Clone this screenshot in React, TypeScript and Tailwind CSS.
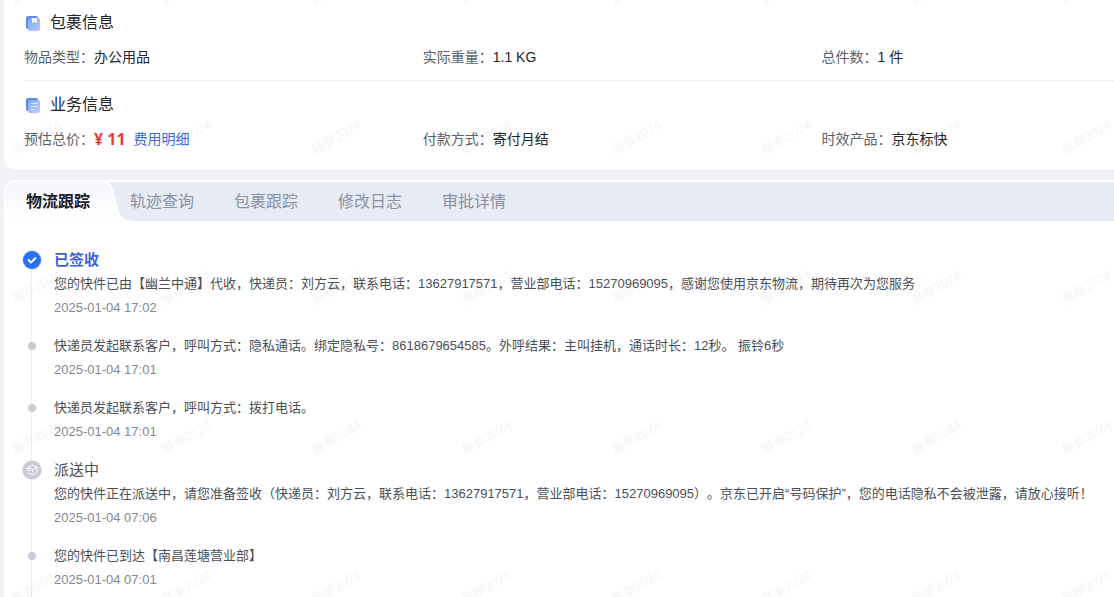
import { useState } from 'react';

const packageInfo = [
  { label: '物品类型：', value: '办公用品' },
  { label: '实际重量：', value: '1.1 KG' },
  { label: '总件数：', value: '1 件' },
];

const tabs = ['物流跟踪', '轨迹查询', '包裹跟踪', '修改日志', '审批详情'];

type TrackingEvent = {
  id: number;
  status?: 'signed' | 'delivering';
  title?: string;
  text: string;
  time: string;
};

const events: TrackingEvent[] = [
  {
    id: 1,
    status: 'signed',
    title: '已签收',
    text: '您的快件已由【幽兰中通】代收，快递员：刘方云，联系电话：13627917571，营业部电话：15270969095，感谢您使用京东物流，期待再次为您服务',
    time: '2025-01-04 17:02',
  },
  {
    id: 2,
    text: '快递员发起联系客户，呼叫方式：隐私通话。绑定隐私号：8618679654585。外呼结果：主叫挂机，通话时长：12秒。 振铃6秒',
    time: '2025-01-04 17:01',
  },
  {
    id: 3,
    text: '快递员发起联系客户，呼叫方式：拨打电话。',
    time: '2025-01-04 17:01',
  },
  {
    id: 4,
    status: 'delivering',
    title: '派送中',
    text: '您的快件正在派送中，请您准备签收（快递员：刘方云，联系电话：13627917571，营业部电话：15270969095）。京东已开启“号码保护”，您的电话隐私不会被泄露，请放心接听！',
    time: '2025-01-04 07:06',
  },
  {
    id: 5,
    text: '您的快件已到达【南昌莲塘营业部】',
    time: '2025-01-04 07:01',
  },
];

function PackageIcon() {
  return (
    <svg width="18" height="18" viewBox="0 0 18 18" aria-hidden="true">
      <defs>
        <linearGradient id="package-front" x1="0" y1="0" x2="1" y2="1">
          <stop offset="0" stopColor="#7fa6f5" />
          <stop offset="1" stopColor="#b4ccff" />
        </linearGradient>
      </defs>
      <rect x="2" y="2" width="12" height="13" rx="2" fill="#5b8af0" />
      <rect x="4" y="4" width="12" height="13" rx="2" fill="url(#package-front)" />
      <path d="M8 4h5v5l-2.500-1L8 9z" fill="#fff" />
    </svg>
  );
}

function BusinessIcon() {
  return (
    <svg width="18" height="18" viewBox="0 0 18 18" aria-hidden="true">
      <defs>
        <linearGradient id="business-front" x1="0" y1="0" x2="1" y2="1">
          <stop offset="0" stopColor="#86abf8" />
          <stop offset="1" stopColor="#b4ccff" />
        </linearGradient>
      </defs>
      <rect x="2" y="2" width="12" height="13" rx="2" fill="#5b8af0" />
      <rect x="4" y="4" width="12" height="13" rx="2" fill="url(#business-front)" />
      <path d="M7 7.500h7M7 10.500h7M7 13.500h4" stroke="#dbe6ff" />
    </svg>
  );
}

// Repeated user mark over the whole page
function Watermark() {
  return (
    <svg className="pointer-events-none absolute inset-0 size-full" aria-hidden="true">
      <defs>
        <pattern id="watermark" x="-39" y="62" width="150" height="150" patternUnits="userSpaceOnUse">
          <text
            x="75"
            y="80"
            textAnchor="middle"
            transform="rotate(-30 75 75)"
            fontSize="13"
            fill="#000"
            fillOpacity="0.04"
          >
            晨泰2024
          </text>
        </pattern>
      </defs>
      <rect width="100%" height="100%" fill="url(#watermark)" />
    </svg>
  );
}

// Slanted right edge of the selected tab
function TabEdge() {
  return (
    <svg
      width="26"
      height="39"
      viewBox="0 0 26 39"
      className="absolute top-0 left-full -ml-1.5"
      aria-hidden="true"
    >
      <defs>
        <linearGradient id="tab-edge" x1="0" y1="0" x2="0" y2="1">
          <stop offset="0" stopColor="#f4f6fb" />
          <stop offset="1" stopColor="#fff" />
        </linearGradient>
      </defs>
      <path d="M0 0C6 0 7 5 9 12C13 25 13 39 26 39H0z" fill="url(#tab-edge)" />
      <path d="M0 0C6 0 7 5 9 12C13 25 13 39 26 39" fill="none" stroke="#fff" strokeWidth="2" />
    </svg>
  );
}

function EventMarker({ status }: { status?: TrackingEvent['status'] }) {
  if (status === 'signed') {
    return (
      <svg width="20" height="20" viewBox="0 0 20 20" className="relative" aria-hidden="true">
        <circle cx="10" cy="10" r="10" fill="#d9e6ff" />
        <circle cx="10" cy="10" r="9" fill="#276ff5" />
        <path
          d="M6.500 10l2.500 2.500 4.500-4.500"
          fill="none"
          stroke="#fff"
          strokeWidth="1.800"
          strokeLinecap="round"
          strokeLinejoin="round"
        />
      </svg>
    );
  }
  if (status === 'delivering') {
    return (
      <svg width="20" height="20" viewBox="0 0 20 20" className="relative" aria-hidden="true">
        <circle cx="10" cy="10" r="9.500" fill="#c8cad5" />
        <g fill="none" stroke="#fff" strokeLinejoin="round" strokeLinecap="round">
          <path d="M6 7.500L10.500 5 15 7.500v5L10.500 15 6 12.500M6.500 7.500l4 2.500L15 7.500M10.500 10v2M4 8.500h3M5 10.500h3" />
        </g>
      </svg>
    );
  }
  return <span className="relative size-2 rounded-full bg-[#c8cad5]" />;
}

export default function App() {
  const [activeTab, setActiveTab] = useState(tabs[0]);

  return (
    <div className="relative flex min-h-screen flex-col overflow-hidden bg-[#f0f2f6] pl-1 font-['Liberation_Sans','Noto_Sans_CJK_SC',sans-serif] text-[#23252b] [text-spacing-trim:space-all]">
      {/* Order info */}
      <div className="rounded-bl-xl bg-white pb-[19px] pl-5">
        <section className="border-b border-[#eff0f3] pt-[13px] pb-[11px]">
          <h2 className="flex h-5 items-center gap-2 text-base">
            <PackageIcon />
            包裹信息
          </h2>
          <dl className="mt-3 grid h-6 grid-cols-[15fr_15fr_11fr] items-center text-sm">
            {packageInfo.map(item => (
              <div key={item.label} className="flex">
                <dt className="text-[#5b5f68]">{item.label}</dt>
                <dd>{item.value}</dd>
              </div>
            ))}
          </dl>
        </section>

        <section className="pt-3.5">
          <h2 className="flex h-5 items-center gap-2 text-base">
            <BusinessIcon />
            业务信息
          </h2>
          <dl className="mt-3 grid h-6 grid-cols-[15fr_15fr_11fr] items-center text-sm">
            <div className="flex items-center">
              <dt className="text-[#5b5f68]">预估总价：</dt>
              <dd className="flex items-center gap-2">
                <span className="font-['Open_Sans',sans-serif] text-base font-bold text-[#e8393c]">¥ 11</span>
                <a href="#fee" className="text-[#3c6bdc]">费用明细</a>
              </dd>
            </div>
            <div className="flex">
              <dt className="text-[#5b5f68]">付款方式：</dt>
              <dd>寄付月结</dd>
            </div>
            <div className="flex">
              <dt className="text-[#5b5f68]">时效产品：</dt>
              <dd>京东标快</dd>
            </div>
          </dl>
        </section>
      </div>

      {/* Tracking panel */}
      <div className="mt-2.5 grow overflow-hidden rounded-tl-xl border-t-2 border-l-2 border-white bg-white">
        <div className="flex h-[39px] bg-[#e7ebf4]" role="tablist">
          {tabs.map(tab => (
            <button
              key={tab}
              role="tab"
              aria-selected={tab === activeTab}
              onClick={() => setActiveTab(tab)}
              className={`relative px-5 text-base ${
                tab === activeTab
                  ? 'bg-linear-to-b from-[#f4f6fb] to-white font-bold text-[#1d2028]'
                  : 'text-[#8a91a3]'
              }`}
            >
              {tab === activeTab && <TabEdge />}
              <span className="relative">{tab}</span>
            </button>
          ))}
        </div>

        <ol className="pt-[27px] pl-4">
          {events.map(event => (
            <li key={event.id} className="relative flex gap-3 pb-3.5 text-[13px] leading-6">
              <span className="absolute top-3 -bottom-3 left-[9px] w-px bg-[#eceef3]" />
              <div className="flex h-6 w-5 shrink-0 items-center justify-center">
                <EventMarker status={event.status} />
              </div>
              <div className="grow whitespace-nowrap">
                {event.title && (
                  <h3
                    className={`text-[15px] leading-6 ${
                      event.status === 'signed' ? 'font-bold text-[#3c62dc]' : 'text-[#4b4f58]'
                    }`}
                  >
                    {event.title}
                  </h3>
                )}
                <p className="text-[#4b4f58]">{event.text}</p>
                <time className="block text-[#858991]">{event.time}</time>
              </div>
            </li>
          ))}
        </ol>
      </div>

      <Watermark />
    </div>
  );
}
